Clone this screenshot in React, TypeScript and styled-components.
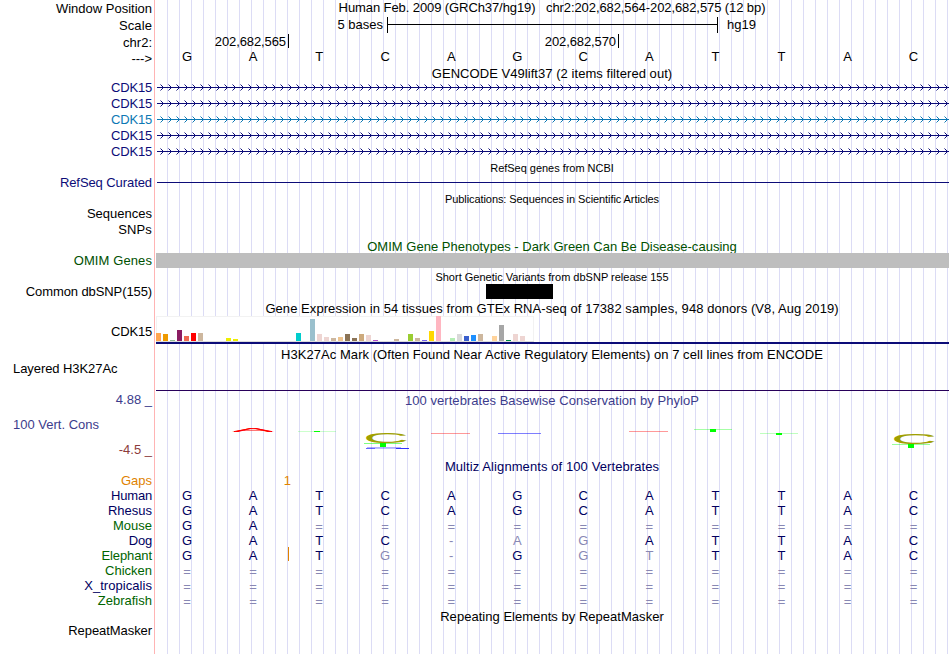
import styled, { createGlobalStyle } from "styled-components";

const NAVY = "#0c0c78";
const MATCH = "#00005f";
const FADED = "#8888b4";
const GREEN = "#006400";
const OMIM = "#005000";
const ORANGE = "#e08200";
const PHYLO = "#3c3c8c";

const GlobalStyle = createGlobalStyle`
  body {
    margin: 0;
    background: #fff;
  }
`;

const Browser = styled.main`
  width: 949px;
  height: 654px;
  overflow: hidden;
  font-family: "Liberation Sans", Arial, sans-serif;
  font-size: 13px;
  line-height: 15px;
  color: #000;
  white-space: pre;
  background:
    linear-gradient(#ffb4b4, #ffb4b4) 154px 0 / 1px 100% no-repeat,
    repeating-linear-gradient(
        to right,
        #dcdcf5 0,
        #dcdcf5 1px,
        transparent 1px,
        transparent 12px
      )
      167px 0 / 782px 100% no-repeat;
`;

const Row = styled.div<{ $h: number }>`
  display: grid;
  grid-template-columns: 152px 1fr;
  column-gap: 3px;
  height: ${(p) => p.$h}px;
`;

const Label = styled.div<{ $color?: string; $top?: number; $ls?: number }>`
  text-align: right;
  padding-top: ${(p) => p.$top ?? 0}px;
  color: ${(p) => p.$color ?? "#000"};
  letter-spacing: ${(p) => p.$ls ?? 0}px;
`;

const LeftLabel = styled(Label)`
  text-align: left;
  padding-left: 13px;
`;

const Title = styled.div<{
  $color?: string;
  $top?: number;
  $small?: boolean;
  $ls?: number;
}>`
  grid-column: 2;
  text-align: center;
  padding-top: ${(p) => p.$top ?? 0}px;
  font-size: ${(p) => (p.$small ? 11 : 13)}px;
  color: ${(p) => p.$color ?? "#000"};
  letter-spacing: ${(p) => p.$ls ?? 0}px;
`;

const Track = styled.div`
  grid-column: 2;
  display: flex;
  align-items: flex-start;
  min-width: 0;
`;

const ScaleText = styled.span<{ $w: number; $ls?: number }>`
  width: ${(p) => p.$w}px;
  text-align: right;
  letter-spacing: ${(p) => p.$ls ?? 0}px;
`;

const ScaleBar = styled.div`
  width: 329px;
  height: 16px;
  margin: 0 9px 0 4px;
  border: solid #000;
  border-width: 0 1px;
  background: linear-gradient(#000, #000) 0 7px / 100% 1px no-repeat;
`;

const Tick = styled.div`
  width: 1px;
  height: 14px;
  margin-left: 2px;
  background: #000;
`;

const Bases = styled.div<{ $top?: number }>`
  display: grid;
  grid-template-columns: repeat(12, 66.06px);
  margin-left: -1px;
  margin-top: ${(p) => p.$top ?? 0}px;
  text-align: center;
`;

const Base = styled.span<{ $color: string; $low?: boolean }>`
  color: ${(p) => p.$color};
  margin-top: ${(p) => (p.$low ? 1 : 0)}px;
`;

const SequenceCell = styled.div`
  position: relative;
  grid-column: 2;
  height: 15px;
`;

// insertion marker lies over the alignment, between two bases
const InsertMark = styled.div`
  position: absolute;
  left: 133px;
  top: -1px;
  width: 1px;
  height: 14px;
  background: ${ORANGE};
`;

const Line = styled.div<{ $color: string; $top: number; $left: number }>`
  flex: 1;
  height: 1px;
  margin-top: ${(p) => p.$top}px;
  margin-left: ${(p) => p.$left}px;
  background: ${(p) => p.$color};
`;

const OmimBar = styled.div`
  flex: 1;
  height: 15px;
  margin-left: 1px;
  background: #bebebe;
`;

const Snp = styled.div`
  width: 67px;
  height: 15px;
  margin-left: 331px;
  background: #000;
`;

const Expression = styled.div`
  flex: 1;
  height: 28px;
  margin-left: 1px;
  box-sizing: border-box;
  border-bottom: 2px solid ${NAVY};
`;

const Bars = styled.div`
  display: flex;
  align-items: flex-end;
  gap: 2px;
  width: 378px;
  height: 26px;
  box-sizing: border-box;
  border-bottom: 1px solid #dcdcdc;
  background: #fff;
  box-shadow: inset 0 1px #f2f2f2, inset -1px 0 #f2f2f2, inset 1px 0 #f2f2f2;
`;

const Bar = styled.div<{ $color: string; $h: number }>`
  flex: 0 0 5px;
  height: ${(p) => p.$h}px;
  background: ${(p) => p.$color};
`;

const ConsLabels = styled.div`
  padding-top: 1px;
`;

const ConsBody = styled.div`
  display: flex;
  flex-direction: column;
  gap: 19px;
  padding-top: 2px;
`;

const genes = [NAVY, NAVY, "#0c78b4", NAVY, NAVY];

const tissues: [string, number][] = [
  ["#ffa54f", 8],
  ["#ee9a00", 7],
  ["#8fbc8f", 1],
  ["#8b1c62", 11],
  ["#ee6a50", 5],
  ["#ff0000", 8],
  ["#cdb79e", 8],
  ["#eeee00", 0],
  ["#eeee00", 0],
  ["#eeee00", 0],
  ["#eeee00", 3],
  ["#eeee00", 2],
  ["#eeee00", 0],
  ["#eeee00", 0],
  ["#eeee00", 0],
  ["#eeee00", 0],
  ["#eeee00", 0],
  ["#eeee00", 0],
  ["#eeee00", 0],
  ["#eeee00", 0],
  ["#00cdcd", 8],
  ["#ee82ee", 0],
  ["#9ac0cd", 22],
  ["#eed5d2", 7],
  ["#eed5d2", 4],
  ["#cdb79e", 3],
  ["#eec591", 4],
  ["#8b7355", 7],
  ["#8b7355", 3],
  ["#cdaa7d", 7],
  ["#eed5d2", 6],
  ["#b452cd", 1],
  ["#7a378b", 0],
  ["#cdb79e", 0],
  ["#cdb79e", 2],
  ["#cdb79e", 0],
  ["#9acd32", 7],
  ["#cdb79e", 3],
  ["#7a67ee", 1],
  ["#ffd700", 10],
  ["#ffb6c1", 25],
  ["#cd9b1d", 0],
  ["#b4eeb4", 3],
  ["#d9d9d9", 7],
  ["#3a5fcd", 5],
  ["#1e90ff", 6],
  ["#cdb79e", 7],
  ["#cdb79e", 0],
  ["#ffd39b", 5],
  ["#a6a6a6", 16],
  ["#008b45", 1],
  ["#eed5d2", 7],
  ["#eed5d2", 5],
  ["#ff00ff", 0],
];

// lower case marks a base that differs from human
const species = [
  { name: "Human", color: MATCH, seq: "GATCAGCATTAC", ls: -0.2 },
  { name: "Rhesus", color: MATCH, seq: "GATCAGCATTAC" },
  { name: "Mouse", color: GREEN, seq: "GA==========" },
  { name: "Dog", color: MATCH, seq: "GATC-agATTAC", ls: -0.2 },
  { name: "Elephant", color: GREEN, seq: "GATg-GgtTTAC", insert: true, ls: -0.1 },
  { name: "Chicken", color: GREEN, seq: "============" },
  { name: "X_tropicalis", color: MATCH, seq: "============", ls: 0.05 },
  { name: "Zebrafish", color: GREEN, seq: "============" },
];

function Sequence({ seq, color, top }: { seq: string; color: string; top?: number }) {
  return (
    <Bases $top={top}>
      {seq.split("").map((b, i) => (
        <Base key={i} $color={/[A-Z]/.test(b) ? color : FADED} $low={b === "="}>
          {b.toUpperCase()}
        </Base>
      ))}
    </Bases>
  );
}

function GeneLine({ color, id }: { color: string; id: string }) {
  return (
    <svg width="794" height="16" shapeRendering="crispEdges">
      <defs>
        <pattern id={id} x="5" y="0" width="8" height="16" patternUnits="userSpaceOnUse">
          <g fill={color}>
            <rect x="0" y="4" width="1" height="1" opacity="0.5" />
            <rect x="1" y="5" width="1" height="1" />
            <rect x="2" y="6" width="1" height="1" />
            <rect x="2" y="8" width="1" height="1" />
            <rect x="1" y="9" width="1" height="1" />
            <rect x="0" y="10" width="1" height="1" opacity="0.5" />
          </g>
        </pattern>
      </defs>
      <rect x="5" width="789" height="16" fill={`url(#${id})`} />
      <rect x="2" y="7" width="792" height="1" fill={color} />
    </svg>
  );
}

type LogoProps = {
  letter: "A" | "C";
  color: string;
  x: number;
  y: number;
  w: number;
  h: number;
};

// base letter stretched to the box (x, y, w, h)
function LogoBase({ letter, color, x, y, w, h }: LogoProps) {
  const advance = letter === "A" ? 66.7 : 72.2;
  return (
    <text
      transform={`translate(${x} ${y + h}) scale(${w / advance} ${h / 69})`}
      fontSize="100"
      fill={color}
    >
      {letter}
    </text>
  );
}

function Conservation() {
  return (
    <svg width="794" height="24" viewBox="155 427 794 24">
      <LogoBase letter="A" color="#ff0000" x={232} y={428} w={42} h={4} />
      <path d="M234 431.6 L250 428.7 H256 L272 431.6" fill="none" stroke="#ff0000" />
      <rect x="298" y="431" width="38" height="1" fill="#00ff00" opacity="0.2" />
      <rect x="314" y="431" width="6" height="1" fill="#00ff00" />
      <LogoBase letter="C" color="#a0a000" x={363} y={433.2} w={46} h={9.6} />
      <rect x="364" y="443" width="38" height="1" fill="#00ff00" opacity="0.5" />
      <rect x="380" y="443" width="6" height="4" fill="#00ff00" />
      <rect x="367" y="447" width="34" height="1" fill="#0000ff" opacity="0.3" />
      <rect x="366" y="448" width="9" height="1" fill="#0000ff" opacity="0.6" />
      <rect x="375" y="448" width="21" height="1" fill="#0000ff" opacity="0.25" />
      <rect x="396" y="448" width="13" height="1" fill="#0000ff" opacity="0.8" />
      <rect x="431" y="433" width="39" height="1" fill="#ff0000" opacity="0.4" />
      <rect x="498" y="433" width="43" height="1" fill="#0000ff" opacity="0.5" />
      <rect x="629" y="431" width="39" height="1" fill="#ff0000" opacity="0.4" />
      <rect x="694" y="429" width="38" height="1" fill="#00ff00" opacity="0.35" />
      <rect x="710" y="429" width="6" height="3" fill="#00ff00" />
      <rect x="760" y="433" width="38" height="1" fill="#00ff00" opacity="0.25" />
      <rect x="776" y="433" width="6" height="2" fill="#00ff00" />
      <LogoBase letter="C" color="#a0a000" x={891} y={433.3} w={46} h={10.5} />
      <rect x="892" y="444" width="38" height="1" fill="#00ff00" opacity="0.4" />
      <rect x="908" y="444" width="6" height="4" fill="#00ff00" />
    </svg>
  );
}

export default function App() {
  return (
    <Browser>
      <GlobalStyle />
      <Row $h={17}>
        <Label $top={1}>Window Position</Label>
        <Title $ls={-0.09}>
          {"Human Feb. 2009 (GRCh37/hg19)   chr2:202,682,564-202,682,575 (12 bp)"}
        </Title>
      </Row>
      <Row $h={17}>
        <Label $top={1} $ls={0.1}>Scale</Label>
        <Track>
          <ScaleText $w={228}>5 bases</ScaleText>
          <ScaleBar />
          <span>hg19</span>
        </Track>
      </Row>
      <Row $h={16}>
        <Label $top={1}>chr2:</Label>
        <Track>
          <ScaleText $w={131} $ls={-0.1}>202,682,565</ScaleText>
          <Tick />
          <ScaleText $w={327} $ls={-0.1}>202,682,570</ScaleText>
          <Tick />
        </Track>
      </Row>
      <Row $h={16}>
        <Label $top={1}>---&gt;</Label>
        <SequenceCell>
          <Sequence seq="GATCAGCATTAC" color="#000" top={-1} />
        </SequenceCell>
      </Row>

      <Row $h={14}>
        <Title $ls={0.05}>GENCODE V49lift37 (2 items filtered out)</Title>
      </Row>
      {genes.map((color, i) => (
        <Row key={i} $h={16}>
          <Label $color={color} $ls={-0.2}>CDK15</Label>
          <GeneLine color={color} id={`arrows${i}`} />
        </Row>
      ))}

      <Row $h={15}>
        <Title $small $top={1} $ls={-0.03}>RefSeq genes from NCBI</Title>
      </Row>
      <Row $h={16}>
        <Label $color={NAVY} $ls={-0.08}>RefSeq Curated</Label>
        <Track>
          <Line $color={NAVY} $top={7} $left={2} />
        </Track>
      </Row>

      <Row $h={15}>
        <Title $small $top={1} $ls={-0.08}>Publications: Sequences in Scientific Articles</Title>
      </Row>
      <Row $h={16}>
        <Label>Sequences</Label>
      </Row>
      <Row $h={16}>
        <Label $ls={0.15}>SNPs</Label>
      </Row>

      <Row $h={15}>
        <Title $top={1} $color={OMIM} $ls={0.02}>
          OMIM Gene Phenotypes - Dark Green Can Be Disease-causing
        </Title>
      </Row>
      <Row $h={16}>
        <Label $color={OMIM} $ls={0.1}>OMIM Genes</Label>
        <Track>
          <OmimBar />
        </Track>
      </Row>

      <Row $h={15}>
        <Title $small $top={1}>Short Genetic Variants from dbSNP release 155</Title>
      </Row>
      <Row $h={16}>
        <Label $ls={-0.1}>Common dbSNP(155)</Label>
        <Track>
          <Snp />
        </Track>
      </Row>

      <Row $h={16}>
        <Title $top={1} $ls={0.066}>
          Gene Expression in 54 tissues from GTEx RNA-seq of 17382 samples, 948 donors (V8, Aug 2019)
        </Title>
      </Row>
      <Row $h={30}>
        <Label $top={8} $ls={-0.2}>CDK15</Label>
        <Track>
          <Expression>
            <Bars>
              {tissues.map(([color, h], i) => (
                <Bar key={i} $color={color} $h={h} />
              ))}
            </Bars>
          </Expression>
        </Track>
      </Row>

      <Row $h={15}>
        <Title $top={1} $ls={0.05}>
          H3K27Ac Mark (Often Found Near Active Regulatory Elements) on 7 cell lines from ENCODE
        </Title>
      </Row>
      <Row $h={30}>
        <LeftLabel $ls={-0.07}>Layered H3K27Ac</LeftLabel>
        <Track>
          <Line $color="#28005a" $top={29} $left={1} />
        </Track>
      </Row>

      <Row $h={68}>
        <ConsLabels>
          <Label $color={PHYLO}>4.88 _</Label>
          <LeftLabel $color={PHYLO} $top={10}>100 Vert. Cons</LeftLabel>
          <Label $color="#8c3c3c" $top={10}>-4.5 _</Label>
        </ConsLabels>
        <ConsBody>
          <Title $color={PHYLO} $ls={0.04}>100 vertebrates Basewise Conservation by PhyloP</Title>
          <Conservation />
        </ConsBody>
      </Row>

      <Row $h={14}>
        <Title $color={MATCH} $ls={0.09}>Multiz Alignments of 100 Vertebrates</Title>
      </Row>
      <Row $h={15}>
        <Label $color={ORANGE}>Gaps</Label>
        <Track>
          <ScaleText $w={136}>
            <Base $color={ORANGE}>1</Base>
          </ScaleText>
        </Track>
      </Row>
      {species.map((s) => (
        <Row key={s.name} $h={15}>
          <Label $color={s.color} $ls={s.ls}>{s.name}</Label>
          <SequenceCell>
            <Sequence seq={s.seq} color={MATCH} />
            {s.insert && <InsertMark />}
          </SequenceCell>
        </Row>
      ))}

      <Row $h={15}>
        <Title $top={1} $ls={0.03}>Repeating Elements by RepeatMasker</Title>
      </Row>
      <Row $h={31}>
        <Label $ls={-0.07}>RepeatMasker</Label>
      </Row>
    </Browser>
  );
}
